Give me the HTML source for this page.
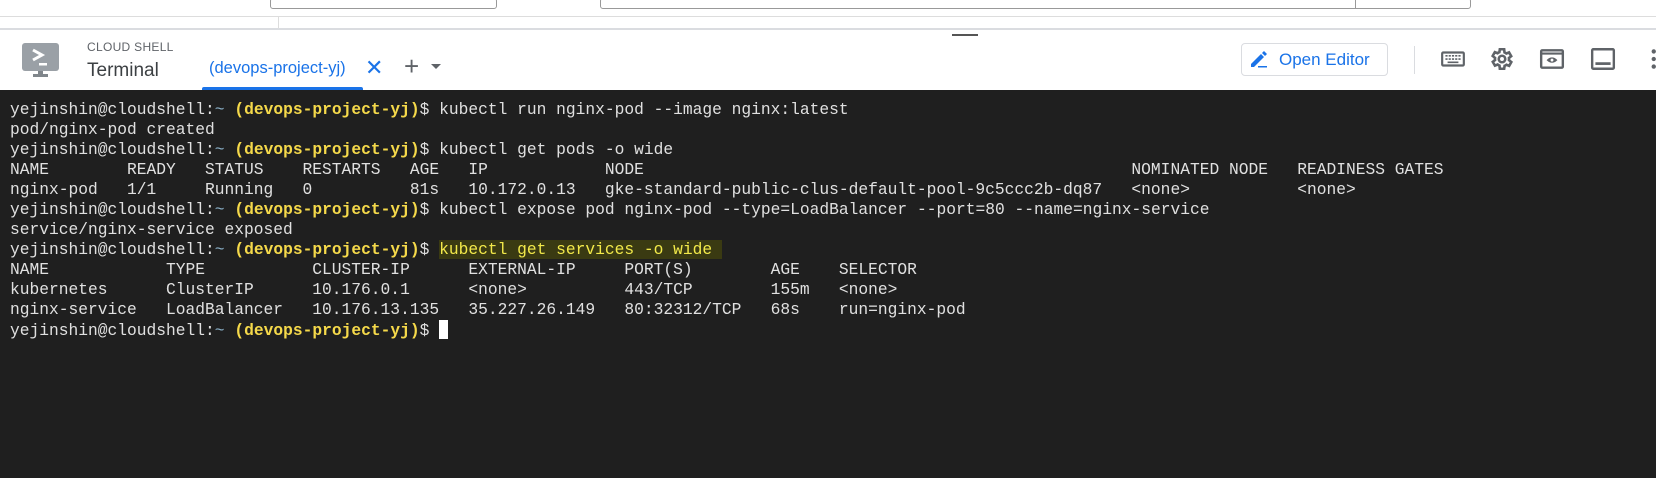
<!DOCTYPE html>
<html><head><meta charset="utf-8"><style>
*{margin:0;padding:0;box-sizing:border-box}
body{width:1656px;height:478px;overflow:hidden;background:#fff;font-family:"Liberation Sans",sans-serif;position:relative}
.abs{position:absolute}
.term{position:absolute;left:0;top:90px;width:1656px;height:388px;background:#1f1f1f}
pre{position:absolute;left:10px;top:100px;font-family:"Liberation Mono",monospace;font-size:16.25px;line-height:20px;color:#e0e0e0}
.y{color:#f5d94a;font-weight:bold}
.t{color:#8ab0c8}
.hl{background:#3a3a12;color:#f2e94a}
.cur{display:inline-block;width:9px;height:19px;background:#fff;vertical-align:-4px}
.icon{position:absolute;top:46px;width:26px;height:26px}
</style></head><body>
<div class="abs" style="left:270px;top:-2px;width:227px;height:11px;border:1px solid #999;border-radius:3px"></div>
<div class="abs" style="left:600px;top:-2px;width:871px;height:11px;border:1px solid #999;border-radius:3px"></div>
<div class="abs" style="left:1355px;top:0;width:1px;height:8px;background:#999"></div>
<div class="abs" style="left:0;top:16px;width:1656px;height:1px;background:#ddd"></div>
<div class="abs" style="left:278px;top:16px;width:1px;height:12px;background:#ddd"></div>
<div class="abs" style="left:0;top:28px;width:1656px;height:2px;background:#dadce0"></div>
<div class="abs" style="left:952px;top:34px;width:26px;height:2px;background:#555"></div>

<svg class="abs" style="left:22px;top:43px" width="38" height="36" viewBox="0 0 38 36">
<rect x="0" y="0" width="37" height="28" rx="3" fill="#9aa0a6"/>
<path d="M11 7 L20 12 L11 17" stroke="#fff" stroke-width="3" fill="none"/>
<rect x="17" y="20" width="8" height="2.5" fill="#fff"/>
<rect x="16" y="28" width="5" height="3" fill="#80868b"/>
<rect x="11" y="31" width="15" height="3" fill="#80868b"/>
</svg>
<div class="abs" style="left:87px;top:40px;font-size:12px;color:#5f6368;letter-spacing:.3px">CLOUD SHELL</div>
<div class="abs" style="left:87px;top:60px;font-size:19px;color:#3c4043">Terminal</div>
<div class="abs" style="left:209px;top:59px;font-size:16.5px;color:#1a73e8">(devops-project-yj)</div>
<div class="abs" style="left:365px;top:55px;font-size:22px;color:#1a73e8">✕</div>
<div class="abs" style="left:202px;top:87px;width:161px;height:3px;background:#1a73e8;border-radius:2px 2px 0 0"></div>
<div class="abs" style="left:404px;top:51px;font-size:26px;color:#5f6368">+</div>
<div class="abs" style="left:431px;top:64px;width:0;height:0;border-left:5px solid transparent;border-right:5px solid transparent;border-top:5px solid #5f6368"></div>

<div class="abs" style="left:1241px;top:43px;width:147px;height:33px;border:1px solid #dadce0;border-radius:4px"></div>
<svg class="abs" style="left:1249px;top:49px" width="20" height="20" viewBox="0 0 20 20"><path d="M2 15 L12 5 L15 8 L5 18 L2 18Z M13 4 L15 2 L18 5 L16 7Z" fill="#1a73e8"/><rect x="9" y="17" width="9" height="1.5" fill="#1a73e8"/></svg>
<div class="abs" style="left:1279px;top:50px;font-size:17px;color:#1a73e8">Open Editor</div>
<div class="abs" style="left:1414px;top:46px;width:1px;height:28px;background:#dadce0"></div>

<svg class="icon" style="left:1440px" viewBox="0 0 24 24"><rect x="2" y="6" width="20" height="12" rx="1" fill="none" stroke="#5f6368" stroke-width="2"/><path d="M5 9h2M8 9h2M11 9h2M14 9h2M17 9h2M5 12h2M8 12h2M11 12h2M14 12h2M17 12h2M7 15h10" stroke="#5f6368" stroke-width="1.5"/></svg>
<svg class="icon" style="left:1489px" viewBox="0 0 24 24"><path d="M19.4 13a7.5 7.5 0 000-2l2.1-1.6-2-3.5-2.5 1a7 7 0 00-1.7-1L15 3h-4l-.4 2.7a7 7 0 00-1.7 1l-2.5-1-2 3.5L6.6 11a7.5 7.5 0 000 2l-2.1 1.6 2 3.5 2.5-1a7 7 0 001.7 1L11 21h4l.4-2.7a7 7 0 001.7-1l2.5 1 2-3.5z" fill="none" stroke="#5f6368" stroke-width="2.4" transform="translate(-1 0)"/><circle cx="12" cy="12" r="3" fill="none" stroke="#5f6368" stroke-width="2.4"/></svg>
<svg class="icon" style="left:1539px" viewBox="0 0 24 24"><rect x="2" y="4" width="20" height="16" rx="1" fill="none" stroke="#5f6368" stroke-width="2.2"/><path d="M2 7h20" stroke="#5f6368" stroke-width="2"/><path d="M7 13q5-5 10 0q-5 5-10 0z" fill="#5f6368"/><circle cx="12" cy="13" r="1.3" fill="#fff"/></svg>
<svg class="icon" style="left:1590px" viewBox="0 0 24 24"><rect x="2" y="3" width="20" height="18" rx="1" fill="none" stroke="#5f6368" stroke-width="2.2"/><rect x="5" y="15" width="14" height="2.5" fill="#5f6368"/></svg>
<svg class="icon" style="left:1644px" viewBox="0 0 24 24"><circle cx="9" cy="5" r="2" fill="#5f6368"/><circle cx="9" cy="12" r="2" fill="#5f6368"/><circle cx="9" cy="19" r="2" fill="#5f6368"/></svg>

<div class="term"></div>
<pre>yejinshin@cloudshell:<span class="t">~</span> <span class="y">(devops-project-yj)</span>$ kubectl run nginx-pod --image nginx:latest
pod/nginx-pod created
yejinshin@cloudshell:<span class="t">~</span> <span class="y">(devops-project-yj)</span>$ kubectl get pods -o wide
NAME        READY   STATUS    RESTARTS   AGE   IP            NODE                                                  NOMINATED NODE   READINESS GATES
nginx-pod   1/1     Running   0          81s   10.172.0.13   gke-standard-public-clus-default-pool-9c5ccc2b-dq87   &lt;none&gt;           &lt;none&gt;
yejinshin@cloudshell:<span class="t">~</span> <span class="y">(devops-project-yj)</span>$ kubectl expose pod nginx-pod --type=LoadBalancer --port=80 --name=nginx-service
service/nginx-service exposed
yejinshin@cloudshell:<span class="t">~</span> <span class="y">(devops-project-yj)</span>$ <span class="hl">kubectl get services -o wide </span>
NAME            TYPE           CLUSTER-IP      EXTERNAL-IP     PORT(S)        AGE    SELECTOR
kubernetes      ClusterIP      10.176.0.1      &lt;none&gt;          443/TCP        155m   &lt;none&gt;
nginx-service   LoadBalancer   10.176.13.135   35.227.26.149   80:32312/TCP   68s    run=nginx-pod
yejinshin@cloudshell:<span class="t">~</span> <span class="y">(devops-project-yj)</span>$ <span class="cur"></span></pre>
</body></html>
